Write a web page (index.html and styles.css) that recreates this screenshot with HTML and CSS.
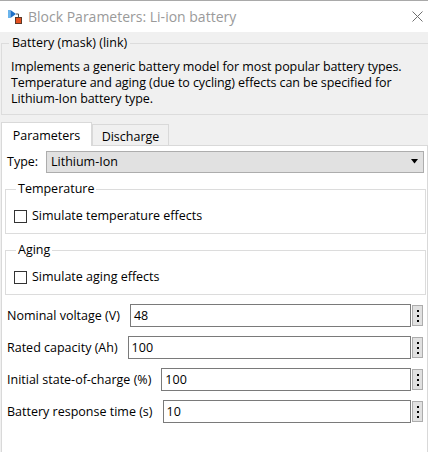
FILE: index.html
```html
<!DOCTYPE html>
<html>
<head>
<meta charset="utf-8">
<link rel="stylesheet" href="styles.css">
</head>
<body>
<div class="window">
  <div class="titlebar">
    <svg class="app-icon" width="16" height="16" viewBox="0 0 16 16">
      <rect x="1" y="1" width="2.5" height="8" fill="#6ab4ec"/>
      <polygon points="3.5,1 9,5 3.5,9" fill="#1f6fc5"/>
      <polyline points="9,5 11.5,5 11.5,8.5" fill="none" stroke="#4a4a4a" stroke-width="1"/>
      <rect x="8.5" y="8.5" width="6" height="6" fill="#e5501f" stroke="#5a3a2a" stroke-width="1"/>
    </svg>
    <span class="title">Block Parameters: Li-ion battery</span>
    <svg class="close" width="11" height="11" viewBox="0 0 11 11">
      <path d="M0.5 0.5 L10.5 10.5 M10.5 0.5 L0.5 10.5" stroke="#6f6f6f" stroke-width="1" fill="none"/>
    </svg>
  </div>
  <div class="content">
    <fieldset class="mask">
      <legend>Battery (mask) (link)</legend>
      <p class="desc">Implements a generic battery model for most popular battery types.<br>Temperature and aging (due to cycling) effects can be specified for<br>Lithium-Ion battery type.</p>
    </fieldset>
    <div class="tabs">
      <div class="tab active">Parameters</div>
      <div class="tab">Discharge</div>
    </div>
    <div class="panel">
      <div class="type-row">
        <span class="type-label">Type:</span>
        <div class="dropdown">
          <span>Lithium-Ion</span>
          <svg width="7" height="5" viewBox="0 0 7 5"><polygon points="0,0 7,0 3.5,4.5" fill="#000"/></svg>
        </div>
      </div>
      <fieldset class="group">
        <legend>Temperature</legend>
        <label class="check"><span class="box"></span>Simulate temperature effects</label>
      </fieldset>
      <fieldset class="group">
        <legend>Aging</legend>
        <label class="check"><span class="box"></span>Simulate aging effects</label>
      </fieldset>
      <div class="params">
        <div class="param">
          <span class="plabel">Nominal voltage (V)</span>
          <div class="edit">48</div>
          <div class="more"><i></i><i></i><i></i></div>
        </div>
        <div class="param">
          <span class="plabel">Rated capacity (Ah)</span>
          <div class="edit">100</div>
          <div class="more"><i></i><i></i><i></i></div>
        </div>
        <div class="param">
          <span class="plabel">Initial state-of-charge (%)</span>
          <div class="edit">100</div>
          <div class="more"><i></i><i></i><i></i></div>
        </div>
        <div class="param">
          <span class="plabel">Battery response time (s)</span>
          <div class="edit">10</div>
          <div class="more"><i></i><i></i><i></i></div>
        </div>
      </div>
    </div>
  </div>
</div>
</body>
</html>
```
FILE: styles.css
```css
* { box-sizing: border-box; }
html, body {
  margin: 0;
  padding: 0;
  width: 428px;
  height: 452px;
  overflow: hidden;
  background: #f0f0f0;
}
body {
  font-family: "Open Sans", "Noto Sans", sans-serif;
  font-size: 12.5px;
  line-height: 16px;
  color: #000;
}
.window {
  display: flex;
  flex-direction: column;
  height: 452px;
}
.titlebar {
  height: 32px;
  flex: none;
  background: #fff;
  border-top: 1px solid #a9a9a9;
  display: flex;
  align-items: center;
  padding-left: 7px;
}
.app-icon { flex: none; margin-top: 1px; }
.title {
  margin-left: 5px;
  color: #9a9a9a;
  font-size: 14px;
}
.close { margin-left: auto; margin-right: 5px; flex: none; }

.content {
  flex: 1;
  display: flex;
  flex-direction: column;
  padding-top: 3px;
}
fieldset {
  margin: 0;
  min-inline-size: 0;
  border: 1px solid #dcdcdc;
}
legend {
  padding: 0 3px;
  line-height: 16px;
}
.mask {
  margin-left: 1px;
  margin-right: -2px;
  padding: 8px 9px 7px 9px;
}
.mask legend { margin-left: -2px; }
.desc { margin: 0; letter-spacing: -0.08px; }

.tabs {
  display: flex;
  margin-top: 6px;
  margin-left: 1px;
  align-items: flex-end;
  height: 24px;
  flex: none;
}
.tab {
  border: 1px solid #d9d9d9;
  border-bottom: none;
  background: #f0f0f0;
  height: 21px;
  width: 77px;
  text-align: center;
  line-height: 23px;
}
.tab.active {
  background: #fff;
  height: 24px;
  width: 91px;
  line-height: 25px;
  position: relative;
  margin-bottom: -1px;
  z-index: 1;
}
.panel {
  flex: 1;
  background: #fff;
  border: 1px solid #d9d9d9;
  border-bottom: none;
  margin-left: 1px;
  padding: 5px 1px 0 3px;
}
.type-row {
  display: flex;
  align-items: center;
  margin-left: 2px;
  margin-right: 2px;
}
.type-label { width: 39px; flex: none; }
.dropdown {
  flex: 1;
  height: 22px;
  background: #e1e1e1;
  border: 1px solid #adadad;
  display: flex;
  align-items: center;
  justify-content: space-between;
  padding: 0 5px 0 4px;
}
.dropdown svg { margin-bottom: 1px; }
.group {
  margin-top: 8px;
  padding: 10px 8px 8px 8px;
}
.group legend { margin-left: 2px; padding: 0 2px; }
.check {
  display: flex;
  align-items: center;
  height: 18px;
}
.box {
  width: 13px;
  height: 13px;
  border: 1px solid #333;
  background: #fff;
  margin-right: 5px;
  flex: none;
}
.params {
  display: flex;
  flex-direction: column;
  gap: 9px;
  margin-top: 9px;
  margin-left: 2px;
  margin-right: 3px;
}
.param {
  display: flex;
  align-items: center;
  height: 23px;
}
.plabel { flex: none; margin-right: 10px; }
.edit {
  flex: 1;
  height: 23px;
  border: 1px solid #7a7a7a;
  background: #fff;
  padding-left: 3px;
  line-height: 21px;
}
.more {
  flex: none;
  width: 11px;
  height: 21px;
  margin-left: 1px;
  background: #e1e1e1;
  border: 1px solid #adadad;
  display: flex;
  flex-direction: column;
  align-items: center;
  justify-content: center;
  gap: 3px;
}
.more i {
  display: block;
  width: 2px;
  height: 2px;
  background: #000;
}
```
